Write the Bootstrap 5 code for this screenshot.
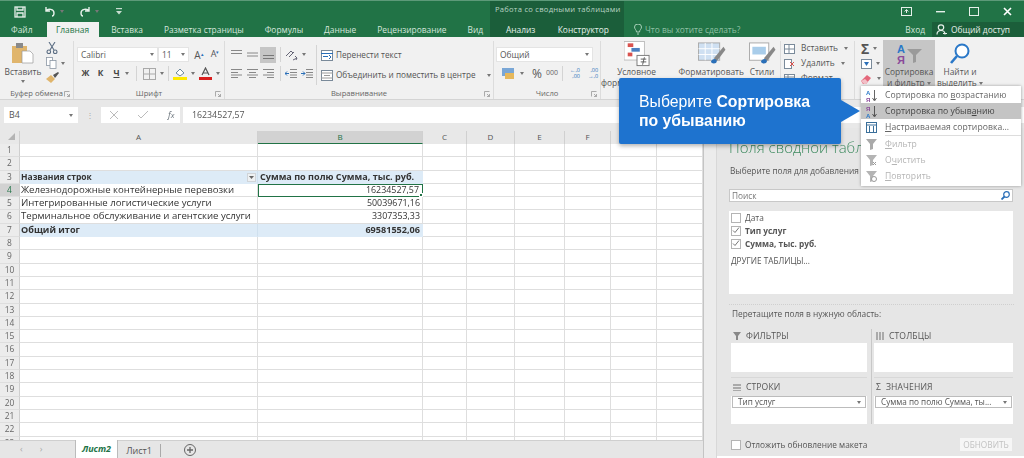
<!DOCTYPE html>
<html lang="ru"><head><meta charset="utf-8"><title>Excel</title>
<link rel="stylesheet" href="https://cdn.jsdelivr.net/npm/bootstrap@5.3.0/dist/css/bootstrap.min.css">
<style>
html,body{margin:0;height:458px;overflow:hidden;background:#fff}
.app{width:1024px;height:458px;position:relative;overflow:hidden;font:8.4px/1.2 "Open Sans",sans-serif;color:#444;filter:blur(.5px)}
svg{display:block;flex:none}
/* title */
.tb{height:37px;background:#217346;color:#d5e6dc;border-top:1px solid #5d9a79}
.tb-l{width:490px}.tb-c{width:134px;background:#1b5e3a}.tb-r{width:400px}
.t1{height:21px}.t2{height:15px}
.q1{margin-left:14px}.q2{margin-left:18px}.q3{margin-left:15px}.q4{margin-left:17px}
.tab{padding:0 10.5px;line-height:15px;white-space:nowrap}
.tab.on{background:#f1f1f1;color:#217346;padding:0 10px 0 9px;margin:0 1.5px 0 4px;height:16px;border-radius:0}
.t2l{padding-left:.5px}
.ctx{font-size:7.6px;letter-spacing:.25px;padding:4px 0 0 5px;color:#b9d4c4}
.ctab{padding-left:16px;width:73px;line-height:15px;color:#e4f0e9}
.ctab+.ctab{padding-left:0}
.win{gap:24px;padding-right:12px;justify-content:flex-end}
.tell{margin-left:10px;color:#8fc0a4;gap:3px;line-height:15px}
.login{margin-left:auto;margin-right:7px;line-height:15px}
.share{width:92px;background:#1b5e3a;height:15px;line-height:15px;padding-left:4px;gap:4px;color:#e6f1ea}
/* ribbon */
.rb{height:63px;background:#f1f1f1;border-bottom:1px solid #d4d4d4;color:#555}
.grp{border-right:1px solid #dcdcdc;margin-top:4px;height:58px;position:relative}
.gb{height:47px}
.gbp{padding-top:4px}
.gl{height:11px;line-height:11px;font-size:7.6px;color:#666;padding:0 3px;position:relative;text-align:center}
.gl svg{position:absolute;right:3px;top:3px}
.g1{width:74px}.g2{width:151px}.g3{width:269px}.g4{width:107px}.g5{width:180px}.g6{width:74px}.g7{width:130px;border:0}
.paste{width:46px;padding-top:2px}
.paste span{margin-top:3px;line-height:9px}
.minis{gap:3px;padding-top:1px}
.ddn{width:0;height:0;border:2.5px solid transparent;border-top:3px solid #777;border-bottom:0;flex:none}
.combo{background:#fff;border:1px solid #e4e4e4;height:15px;line-height:13px;padding:0 3px;color:#555}
.c-font{width:81px;margin-left:3px}.c-size{width:31px}.c-num{width:97px;margin-left:2px}
.fr{height:19px;gap:0}
.bx{width:15px;text-align:center;font-weight:700;color:#444}
.bx2{width:17px}
.A1{font-size:10px;width:16px;text-align:center;color:#555;margin-left:2px}.A2{font-size:9px;width:16px;text-align:center;color:#555}
.A1 sup,.A2 sup{color:#2a6fb8;font-size:5px;top:-.6em}
.vs{width:1px;height:15px;background:#d4d4d4;margin:0 4px;flex:none}
.vs2{margin:0 6px 0 7px}
.algn{width:16px;height:16px;display:flex;align-items:center;justify-content:center;flex:none}
.algn.sel{background:#c6c6c6}
.a-col{padding-left:3px}
.a-rule{height:40px;margin:0 4px 0 3px}
.cmd{gap:3px;white-space:nowrap;color:#555;height:20px;font-size:8.2px}
.pct{font-size:12px;line-height:1;margin-left:8px;color:#555}
.th{font-size:7px;margin-left:4px;color:#666}
.stk{font-size:5.500px;line-height:5.500px;color:#2a6fb8;margin-left:3px;text-align:right}
.bigb{text-align:center;line-height:10.5px;white-space:nowrap}
.bigb svg{margin:0 auto}
.b-cf{margin-left:0;margin-right:auto}
.sortb{width:52px;height:46px;background:#c6c6c6;margin-top:-1px}
.sortb svg{margin-top:3px;margin-bottom:2px}
.findb{width:46px;margin-left:2px;padding-top:2px}
.findb svg{margin-bottom:2px}
.cellr{height:15px;gap:6px;white-space:nowrap;padding-left:3px}
.sumr{height:15px;gap:4px;padding-left:6px;width:28px}
.sig{font-size:14px;line-height:1;font-weight:700}
/* formula */
.fb{height:28px;background:#e8e8e8;padding:7px 0 5px 4px;gap:0}
.fx{background:#fff;height:16px;line-height:16px;color:#555;font-size:8.8px}
.nm{width:74px;padding:0 5px}
.dots{width:23px;text-align:center;color:#aaa;line-height:16px}
.fbtn{width:79px;padding:0 9px;gap:16px}
.ft{margin-left:3px;flex:1;padding-left:9px}
/* sheet */
.main{height:330px}
.sh{width:703px;background:#fff;position:relative}
.ch{height:16px;padding-top:3px;background:#e8e8e8;font-size:8px;color:#555;flex:none}
.ch>div{height:13px;line-height:12px;text-align:center;background:#e8e8e8;border-right:1px solid #d0d0d0;flex:none}
.ch .c0{width:20px;position:relative}
.ch .cA{width:238px}.ch .cB{width:165px;background:#d2d2d2;border-bottom:1px solid #217346;color:#217346}
.cC{width:44px}.cD{width:48px}.cE{width:50px}.cF{width:46px}.cG{width:46px}.cH{width:46px}
.rows{height:296px;overflow:hidden;flex:none}
.r{display:flex;height:13.3px;line-height:12.6px;font-size:9.6px;color:#333}
.r>div{border-bottom:1px solid #dedede;white-space:nowrap;overflow:hidden;flex:none}
.rh{width:20px;background:#ececec;text-align:center;color:#666;font-size:8.4px;border-right:1px solid #cfcfcf}
.rh.on{background:#d2d2d2;color:#217346}
.ra{width:238px;padding-left:1px;border-right:1px solid #dedede}
.rb2{width:165px;padding-right:2px;text-align:right;border-right:1px solid #dedede;font-size:8.9px}
.rx{width:280px;background-image:linear-gradient(#dedede,#dedede),linear-gradient(#dedede,#dedede),linear-gradient(#dedede,#dedede),linear-gradient(#dedede,#dedede),linear-gradient(#dedede,#dedede),linear-gradient(#dedede,#dedede);background-size:1px 100%;background-repeat:no-repeat;background-position:43px 0,91px 0,141px 0,187px 0,233px 0,279px 0}
.r.hd .ra,.r.hd .rb2{background:#ddebf7;font-weight:700;border-bottom-color:#ddebf7;border-right-color:#ddebf7;font-size:9.1px}
.r.hd .ra{display:flex;justify-content:space-between;padding-right:1px;border-right-color:#cfe0ee}
.r.hd .rb2.ttl{text-align:left;padding-left:2px;padding-right:0}
.nmh{font-size:8.500px}
.filt{width:9px;height:9px;margin-top:2px;background:#eef1f3;border:1px solid #d0d4d8;display:flex;align-items:center;justify-content:center;flex:none}
.rb2.cur{outline:1.4px solid #217346;outline-offset:-1.4px;position:relative;overflow:visible;padding-right:3px}
.rb2.cur::after{content:"";position:absolute;right:-1px;bottom:-1px;width:4px;height:4px;background:#217346;border:1px solid #fff}
.stabs{height:18px;background:#e6e6e6;border-top:1px solid #cfcfcf;position:absolute;left:0;right:0;bottom:0;font-size:9px}
.arrs{width:75px;padding-left:20px;gap:17px;color:#aaa}
.st{width:43px;text-align:center;line-height:17px;height:18px}
.st.on{background:#fff;color:#217346;font-weight:700;font-style:italic;margin-top:-1px;border-left:1px solid #bbb;border-right:1px solid #bbb}
.st.off{border-right:1px solid #aaa;height:13px;line-height:13px;color:#555;margin-top:1px}
.plus{margin-left:23px}
.vsc{width:14px;background:#ececec;border-left:1px solid #c4c4c4;border-right:1px solid #d8d8d8}
/* panel */
.pn{width:307px;background:#e6e6e6;padding:1px 0 0 0;height:328px;color:#555;font-size:8.3px}
.ptitle{font-size:15px;font-weight:300;color:#3d8a5f;padding-left:12px;line-height:25px;white-space:nowrap;margin-top:6px}
.psub{padding-left:13px;line-height:12px;margin-top:5px;white-space:nowrap}
.psearch{margin:12px 11px 0 12px;height:13px;background:#fff;border:1px solid #c8c8c8;line-height:11px;padding:0 2px;color:#777}
.flist{margin:9px 11px 0 12px;height:83px;background:#fff;padding:0 2px;color:#555}
.ck{gap:4px;height:13px;line-height:13px}
.cb{width:10px;height:10px;background:#fff;border:1px solid #b4b4b4;flex:none;display:flex;align-items:center;justify-content:center}
.ck.bd{font-weight:700}
.other{margin-top:4px;line-height:13px;font-size:8.2px}
.dots2{margin:10px 10px 0 12px;border-top:1px dotted #cfcfcf}
.drag{padding-left:15px;margin-top:3px;line-height:12px}
.areas{margin:9px 0 0 14px;width:282px;display:grid;grid-template-columns:141px 141px;grid-template-rows:48px 47px}
.ar{padding-right:4px;border-right:1px solid #c8c8c8}
.ar2{padding-left:2px}
.arh{height:14px;gap:5px;padding-left:2px;font-size:8.6px;letter-spacing:.1px}
.arb{background:#fff;height:29px}
.arh.rowhd{border-top:1px solid #d8d8d8;height:19px}
.pick{background:#fff;border:1px solid #bcbcbc;height:12px;line-height:10px;padding:0 4px 0 5px;margin:0 1px;font-size:8.2px;color:#555}
.arb.low{height:28px}
.pfoot{margin:14px 12px 0 14px;height:13px}
.pfoot .btnu{margin-left:auto;width:52px;background:#f6f6f6;color:#c2c2c2;text-align:center;line-height:13px;font-size:8.3px;border:0;padding:0}
/* overlay */
.tip{position:absolute;left:619px;top:78px;width:222px;height:66px;background:#1e73cf;color:#fff;border-radius:2px;box-shadow:0 2px 4px rgba(0,0,0,.3);font:15.8px/18.5px "Liberation Sans",sans-serif;padding:15px 0 0 20px;z-index:5}
.tip::after{content:"";position:absolute;left:222px;top:22px;border-left:19px solid #1e73cf;border-top:11px solid transparent;border-bottom:11px solid transparent}
.menu.dropdown-menu{position:absolute;left:861px;top:86px;width:160px;height:100px;padding:1px 0;margin:0;border:0;border-radius:0;background:#fff;box-shadow:0 0 3px rgba(0,0,0,.35);font-size:8.6px;min-width:0;z-index:4;display:block}
.menu .dropdown-item{height:16px;line-height:16px;padding:0 0 0 5px;display:flex;gap:8px;align-items:center;color:#666;font-size:8.6px;letter-spacing:.05px}
.menu .dropdown-item.act{background:#c4c4c4;color:#444}
.menu .dropdown-item.dis{color:#b5b5b5}
.menu .dropdown-divider{margin:0 0 0 24px;border-color:#ddd}
.lt{font:700 6px "Liberation Sans",sans-serif}
u{text-underline-offset:1px}
</style></head><body>
<div class="app">

<div class="tb d-flex">
 <div class="tb-l">
  <div class="t1 d-flex align-items-center">
   <svg class="q1" width="12" height="12" viewBox="0 0 12 12" fill="none" stroke="#e6f0ea" stroke-width="1.3"><rect x="1" y="1" width="10" height="10"/><path d="M3 1v3h6V1M3 11V7h6v4"/></svg>
   <svg class="q2" width="12" height="11" viewBox="0 0 12 11" fill="none" stroke="#e6f0ea" stroke-width="1.4"><path d="M2 1v4h4M2 5c2-3 8-2 8 2 0 2-1 3-2 3"/></svg>
   <span class="ddn ms-1"></span>
   <svg class="q3" width="12" height="11" viewBox="0 0 12 11" fill="none" stroke="#e6f0ea" stroke-width="1.4"><path d="M10 1v4H6M10 5C8 2 2 3 2 7c0 2 1 3 2 3"/></svg>
   <span class="ddn ms-1"></span>
   <svg class="q4" width="6" height="7" viewBox="0 0 6 7" fill="#c9ddd1"><rect y="0" width="6" height="1.2"/><path d="M0 3h6L3 6.5z"/></svg>
  </div>
  <div class="t2 d-flex t2l">
   <div class="tab">Файл</div><div class="tab on">Главная</div><div class="tab">Вставка</div><div class="tab">Разметка страницы</div><div class="tab">Формулы</div><div class="tab">Данные</div><div class="tab">Рецензирование</div><div class="tab">Вид</div>
  </div>
 </div>
 <div class="tb-c">
  <div class="t1 ctx text-nowrap">Работа со сводными таблицами</div>
  <div class="t2 d-flex"><div class="ctab">Анализ</div><div class="ctab">Конструктор</div></div>
 </div>
 <div class="tb-r">
  <div class="t1 d-flex align-items-center win">
   <svg width="11" height="9" viewBox="0 0 11 9" fill="none" stroke="#e6f0ea"><rect x=".5" y=".5" width="10" height="8"/><path d="M5.5 6V3M3.7 4.5l1.8-2 1.8 2" /></svg>
   <svg width="9" height="2" viewBox="0 0 9 2"><rect width="9" height="1.4" fill="#e6f0ea"/></svg>
   <svg width="10" height="9" viewBox="0 0 10 9" fill="none" stroke="#e6f0ea"><rect x=".5" y=".5" width="9" height="8"/></svg>
   <svg width="9" height="9" viewBox="0 0 9 9" stroke="#fff" stroke-width="1.6"><path d="M1 1l7 7M8 1L1 8"/></svg>
  </div>
  <div class="t2 d-flex">
   <div class="tell d-flex align-items-center"><svg width="8" height="11" viewBox="0 0 8 11" fill="none" stroke="#a8d0b8"><path d="M2.5 8c0-2-2-3-2-5a3.5 3 0 0 1 7 0c0 2-2 3-2 5zM3 10h2"/></svg><span>Что вы хотите сделать?</span></div>
   <div class="login">Вход</div>
   <div class="share d-flex align-items-center"><svg width="11" height="11" viewBox="0 0 11 11" fill="none" stroke="#e6f0ea" stroke-width="1.2"><circle cx="5" cy="3.5" r="2.7"/><path d="M1 10.5c0-3 2-4 4-4s4 1 4 4M7 9.500h4"/></svg><span>Общий доступ</span></div>
  </div>
 </div>
</div>

<div class="rb d-flex">
 <div class="grp g1">
  <div class="gb d-flex">
   <div class="paste d-flex flex-column align-items-center">
    <svg width="22" height="21" viewBox="0 0 22 21"><rect x="0" y="3" width="15" height="17" fill="#e0b56c"/><rect x="4" y="0" width="7" height="5" fill="#8a8a8a"/><path d="M10 8h8l3 3v9H10z" fill="#fff" stroke="#999" stroke-width=".7"/></svg>
    <span>Вставить</span><span class="ddn mt-1"></span>
   </div>
   <div class="minis d-flex flex-column">
    <svg width="12" height="12" viewBox="0 0 12 12" fill="none" stroke="#5b6d83" stroke-width="1.1"><path d="M3 0l5 8M9 0L4 8"/><circle cx="2.800" cy="9.800" r="1.800"/><circle cx="9.200" cy="9.800" r="1.800"/></svg>
    <div class="d-flex align-items-center gap-1"><svg width="11" height="12" viewBox="0 0 11 12" fill="#fff" stroke="#8a96a3" stroke-width=".8"><rect x=".5" y=".5" width="6" height="8"/><rect x="4" y="3.500" width="6" height="8"/></svg><span class="ddn"></span></div>
    <svg width="13" height="11" viewBox="0 0 13 11"><path d="M0 7l5-4 4 4-4 4z" fill="#e0b56c"/><path d="M7 3l5-3 1 1-4 5z" fill="#555"/></svg>
   </div>
  </div>
  <div class="gl">Буфер обмена<svg width="6" height="6" viewBox="0 0 6 6" fill="none" stroke="#999" stroke-width=".8"><path d="M.5 5.500V.5h5M3 3l2.500 2.500M5.500 3v2.500H3"/></svg></div>
 </div>

 <div class="grp g2">
  <div class="gb gbp">
   <div class="fr d-flex align-items-center">
    <div class="combo c-font d-flex justify-content-between align-items-center"><span>Calibri</span><span class="ddn"></span></div>
    <div class="combo c-size d-flex justify-content-between align-items-center"><span>11</span><span class="ddn"></span></div>
    <span class="A1">A<sup>▴</sup></span><span class="A2">A<sup>▾</sup></span>
   </div>
   <div class="fr d-flex align-items-center">
    <span class="bx ms-1">Ж</span><span class="bx">К</span><span class="bx bx2"><u>Ч</u></span><span class="ddn"></span>
    <span class="vs vs2"></span>
    <svg width="13" height="12" viewBox="0 0 13 12" fill="none" stroke="#a9a9a9"><rect x=".5" y=".5" width="12" height="11"/><path d="M6.500 0v12M0 6h13"/></svg>
    <span class="ddn ms-1"></span><span class="vs"></span>
    <svg width="14" height="13" viewBox="0 0 14 13"><path d="M3 6l4-4 4 4-4 3z" fill="#fff" stroke="#6d8a9e"/><rect y="10" width="14" height="3" fill="#ffea00"/></svg>
    <span class="ddn ms-1"></span>
    <svg class="ms-1" width="13" height="13" viewBox="0 0 13 13"><path d="M3 8l3.500-7L10 8M4.500 6h4" fill="none" stroke="#555" stroke-width="1.2"/><rect y="10" width="13" height="3" fill="#d81e1e"/></svg>
    <span class="ddn ms-1"></span>
   </div>
  </div>
  <div class="gl">Шрифт<svg width="6" height="6" viewBox="0 0 6 6" fill="none" stroke="#999" stroke-width=".8"><path d="M.5 5.500V.5h5M3 3l2.500 2.500M5.500 3v2.500H3"/></svg></div>
 </div>

 <div class="grp g3">
  <div class="gb gbp d-flex">
   <div class="a-col">
    <div class="fr d-flex align-items-center">
     <div class="algn"><svg width="11" height="9" viewBox="0 0 11 9" stroke="#888"><path d="M0 .5h11M0 3.500h11"/></svg></div>
     <div class="algn"><svg width="11" height="9" viewBox="0 0 11 9" stroke="#888"><path d="M0 3h11M0 6h11"/></svg></div>
     <div class="algn sel"><svg width="11" height="9" viewBox="0 0 11 9" stroke="#777"><path d="M0 5.500h11M0 8.500h11"/></svg></div>
     <span class="vs"></span>
     <svg width="13" height="12" viewBox="0 0 13 12" fill="none" stroke="#667"><path d="M1 7l5-5 2 2M4 8l5-5M8 11l4-2M10 7l2 2-1 2"/></svg>
     <span class="ddn ms-1"></span>
    </div>
    <div class="fr d-flex align-items-center">
     <div class="algn"><svg width="11" height="9" viewBox="0 0 11 9" stroke="#888"><path d="M0 .5h11M0 3.500h7M0 6h11M0 8.500h7"/></svg></div>
     <div class="algn"><svg width="11" height="9" viewBox="0 0 11 9" stroke="#888"><path d="M0 .5h11M2 3.500h7M0 6h11M2 8.500h7"/></svg></div>
     <div class="algn"><svg width="11" height="9" viewBox="0 0 11 9" stroke="#888"><path d="M0 .5h11M4 3.500h7M0 6h11M4 8.500h7"/></svg></div>
     <span class="vs"></span>
     <svg width="12" height="9" viewBox="0 0 12 9" stroke="#888" fill="none"><path d="M5 .5h7M5 3.500h7M5 6h7M5 8.500h7"/><path d="M4 4.500H0M2 2.500l-2 2 2 2" stroke="#2a6fb8"/></svg>
     <svg class="ms-1" width="12" height="9" viewBox="0 0 12 9" stroke="#888" fill="none"><path d="M5 .5h7M5 3.500h7M5 6h7M5 8.500h7"/><path d="M0 4.500h4M2 2.500l2 2-2 2" stroke="#2a6fb8"/></svg>
    </div>
   </div>
   <span class="vs a-rule"></span>
   <div>
    <div class="cmd d-flex align-items-center"><svg width="12" height="11" viewBox="0 0 12 11" fill="none" stroke="#7a8a9a"><rect x=".5" y=".5" width="11" height="10" fill="#fff"/><path d="M0 3.500h12M2 6.500h5M8 5l2 2-2 2" stroke="#2a6fb8"/></svg><span>Перенести текст</span></div>
    <div class="cmd d-flex align-items-center"><svg width="12" height="11" viewBox="0 0 12 11" fill="none" stroke="#7a8a9a"><rect x=".5" y=".5" width="11" height="10" fill="#fff"/><path d="M0 3h12M0 8h12M3 5.500h6" stroke="#9a9a9a"/></svg><span>Объединить и поместить в центре</span><span class="ddn ms-2"></span></div>
   </div>
  </div>
  <div class="gl">Выравнивание<svg width="6" height="6" viewBox="0 0 6 6" fill="none" stroke="#999" stroke-width=".8"><path d="M.5 5.500V.5h5M3 3l2.500 2.500M5.500 3v2.500H3"/></svg></div>
 </div>

 <div class="grp g4">
  <div class="gb gbp">
   <div class="fr d-flex align-items-center"><div class="combo c-num d-flex justify-content-between align-items-center"><span>Общий</span><span class="ddn"></span></div></div>
   <div class="fr d-flex align-items-center ps-1">
    <svg class="ms-1" width="14" height="12" viewBox="0 0 14 12"><rect width="12" height="8" fill="#7aa7d6"/><rect x="3" y="5" width="9" height="6" fill="#e6b85c"/></svg>
    <span class="ddn ms-1"></span>
    <span class="pct">%</span>
    <span class="th">000</span>
    <span class="vs"></span>
    <span class="stk">←,0<br>,00</span>
    <span class="stk ms-2">,00<br>→,0</span>
   </div>
  </div>
  <div class="gl">Число<svg width="6" height="6" viewBox="0 0 6 6" fill="none" stroke="#999" stroke-width=".8"><path d="M.5 5.500V.5h5M3 3l2.500 2.500M5.500 3v2.500H3"/></svg></div>
 </div>

 <div class="grp g5 d-flex">
  <div class="bigb b-cf">
   <svg width="26" height="26" viewBox="0 0 28 27"><rect width="22" height="20" fill="#fff" stroke="#bbb"/><rect x="4" y="2" width="6" height="4" fill="#d9534f"/><rect x="8" y="7" width="9" height="4" fill="#4a7fc0"/><rect x="4" y="12" width="5" height="4" fill="#d9534f"/><rect x="14" y="15" width="13" height="11" fill="#fff" stroke="#777"/><path d="M18 19h6M18 22h6M22 17l-2 8" stroke="#555"/></svg>
   <div>Условное</div><div>форматирование</div>
  </div>
  <div class="bigb me-1">
   <svg width="30" height="26" viewBox="0 0 30 27"><rect x="2" y="2" width="22" height="18" fill="#cfe0f2" stroke="#aaa"/><path d="M2 8h22M2 14h22M9 2v18M16 2v18" stroke="#fff"/><path d="M28 6L18 18l3 3L30 9z" fill="#888"/><path d="M15 21c2-3 6-3 6 0 0 3-6 3-6 0z" fill="#2a6fb8"/></svg>
   <div>Форматировать</div><div>как таблицу</div>
  </div>
  <div class="bigb pe-1">
   <svg width="28" height="26" viewBox="0 0 28 27"><rect x="1" y="2" width="20" height="18" fill="#fff" stroke="#aaa"/><rect x="4" y="6" width="14" height="8" fill="#a9cdea"/><path d="M26 6L16 18l3 3L28 9z" fill="#888"/><path d="M13 21c2-3 6-3 6 0 0 3-6 3-6 0z" fill="#2a6fb8"/></svg>
   <div>Стили</div><div>ячеек</div>
  </div>
 </div>

 <div class="grp g6">
  <div class="cellr d-flex align-items-center"><svg width="11" height="10" viewBox="0 0 11 10" fill="#fff" stroke="#7a8a9a"><rect x=".5" y=".5" width="10" height="9"/><path d="M0 5h11M5 0v10"/></svg><span>Вставить</span><span class="ddn"></span></div>
  <div class="cellr d-flex align-items-center"><svg width="11" height="10" viewBox="0 0 11 10" fill="#fff" stroke="#7a8a9a"><rect x=".5" y=".5" width="7" height="9"/><path d="M6 3l4 4M10 3L6 7" stroke="#d9534f"/></svg><span>Удалить</span><span class="ddn"></span></div>
  <div class="cellr d-flex align-items-center"><svg width="11" height="10" viewBox="0 0 11 10" fill="#fff" stroke="#7a8a9a"><rect x=".5" y=".5" width="10" height="9"/><path d="M0 3h11M0 6h11M4 0v10"/></svg><span>Формат</span></div>
 </div>

 <div class="grp g7 d-flex">
  <div>
   <div class="sumr d-flex align-items-center"><span class="sig">Σ</span><span class="ddn"></span></div>
   <div class="sumr d-flex align-items-center"><svg width="11" height="10" viewBox="0 0 11 10"><rect x=".5" y=".5" width="10" height="9" fill="#fff" stroke="#7a8a9a"/><path d="M3 3h5L5.500 7z" fill="#2a6fb8"/></svg><span class="ddn"></span></div>
   <div class="sumr d-flex align-items-center"><svg width="12" height="10" viewBox="0 0 12 10"><path d="M0 7l6-6 4 3-5 6H2z" fill="#e4677a"/><path d="M0 7l3 3h2l2-2-3-3z" fill="#f3c0c8"/></svg><span class="ddn"></span></div>
  </div>
  <div class="sortb bigb">
   <svg width="28" height="22" viewBox="0 0 28 22"><text x="2" y="10" font-size="11" font-weight="700" fill="#2a78c8" font-family="Liberation Sans">А</text><text x="2" y="21" font-size="11" font-weight="700" fill="#8a4a9a" font-family="Liberation Sans">Я</text><path d="M12 6h15l-6 6v7l-3 1v-8z" fill="#9a9a9a"/></svg>
   <div>Сортировка</div><div>и фильтр <span class="ddn d-inline-block align-middle"></span></div>
  </div>
  <div class="findb bigb">
   <svg width="22" height="22" viewBox="0 0 22 22" fill="none" stroke="#2a78c8" stroke-width="2"><circle cx="13" cy="8" r="6.500" fill="#fff"/><path d="M8 13L2 20" stroke-width="2.600"/></svg>
   <div>Найти и</div><div>выделить <span class="ddn d-inline-block align-middle"></span></div>
  </div>
 </div>
</div>

<div class="fb d-flex">
 <div class="fx nm d-flex justify-content-between align-items-center"><span>B4</span><span class="ddn"></span></div>
 <div class="dots">⋮</div>
 <div class="fx fbtn d-flex align-items-center">
  <svg width="8" height="8" viewBox="0 0 8 8" stroke="#bbb"><path d="M0 0l8 8M8 0L0 8"/></svg>
  <svg class="ms-1" width="10" height="8" viewBox="0 0 10 8" stroke="#bbb" fill="none"><path d="M0 4l3 3 7-7"/></svg>
  <i class="ms-1 text-secondary">f<small>x</small></i>
 </div>
 <div class="fx ft">16234527,57</div>
</div>

<div class="main d-flex">
 <div class="sh">
  <div class="ch d-flex">
   <div class="c0"><svg class="position-absolute end-0 bottom-0 me-1 mb-1" width="7" height="7" viewBox="0 0 7 7"><path d="M7 0v7H0z" fill="#b4b4b4"/></svg></div>
   <div class="cA">A</div><div class="cB">B</div><div class="cC">C</div><div class="cD">D</div><div class="cE">E</div><div class="cF">F</div><div class="cG">G</div><div class="cH">H</div>
  </div>
  <div class="rows">
   <div class="r"><div class="rh">1</div><div class="ra"></div><div class="rb2"></div><div class="rx"></div></div>
   <div class="r"><div class="rh">2</div><div class="ra"></div><div class="rb2"></div><div class="rx"></div></div>
   <div class="r hd"><div class="rh">3</div><div class="ra"><span class="nmh">Названия строк</span><span class="filt"><svg width="5" height="3" viewBox="0 0 5 3"><path d="M0 0h5L2.500 3z" fill="#666"/></svg></span></div><div class="rb2 ttl">Сумма по полю Сумма, тыс. руб.</div><div class="rx"></div></div>
   <div class="r"><div class="rh on">4</div><div class="ra">Железнодорожные контейнерные перевозки</div><div class="rb2 cur">16234527,57</div><div class="rx"></div></div>
   <div class="r"><div class="rh">5</div><div class="ra">Интегрированные логистические услуги</div><div class="rb2">50039671,16</div><div class="rx"></div></div>
   <div class="r"><div class="rh">6</div><div class="ra">Терминальное обслуживание и агентские услуги</div><div class="rb2">3307353,33</div><div class="rx"></div></div>
   <div class="r hd"><div class="rh">7</div><div class="ra"><span>Общий итог</span></div><div class="rb2">69581552,06</div><div class="rx"></div></div>
   <div class="r"><div class="rh">8</div><div class="ra"></div><div class="rb2"></div><div class="rx"></div></div>
   <div class="r"><div class="rh">9</div><div class="ra"></div><div class="rb2"></div><div class="rx"></div></div>
   <div class="r"><div class="rh">10</div><div class="ra"></div><div class="rb2"></div><div class="rx"></div></div>
   <div class="r"><div class="rh">11</div><div class="ra"></div><div class="rb2"></div><div class="rx"></div></div>
   <div class="r"><div class="rh">12</div><div class="ra"></div><div class="rb2"></div><div class="rx"></div></div>
   <div class="r"><div class="rh">13</div><div class="ra"></div><div class="rb2"></div><div class="rx"></div></div>
   <div class="r"><div class="rh">14</div><div class="ra"></div><div class="rb2"></div><div class="rx"></div></div>
   <div class="r"><div class="rh">15</div><div class="ra"></div><div class="rb2"></div><div class="rx"></div></div>
   <div class="r"><div class="rh">16</div><div class="ra"></div><div class="rb2"></div><div class="rx"></div></div>
   <div class="r"><div class="rh">17</div><div class="ra"></div><div class="rb2"></div><div class="rx"></div></div>
   <div class="r"><div class="rh">18</div><div class="ra"></div><div class="rb2"></div><div class="rx"></div></div>
   <div class="r"><div class="rh">19</div><div class="ra"></div><div class="rb2"></div><div class="rx"></div></div>
   <div class="r"><div class="rh">20</div><div class="ra"></div><div class="rb2"></div><div class="rx"></div></div>
   <div class="r"><div class="rh">21</div><div class="ra"></div><div class="rb2"></div><div class="rx"></div></div>
   <div class="r"><div class="rh">22</div><div class="ra"></div><div class="rb2"></div><div class="rx"></div></div>
   <div class="r"><div class="rh">23</div><div class="ra"></div><div class="rb2"></div><div class="rx"></div></div>
  </div>
  <div class="stabs d-flex align-items-center">
   <div class="arrs d-flex"><span>‹</span><span>›</span></div>
   <div class="st on">Лист2</div><div class="st off">Лист1</div>
   <svg class="plus" width="12" height="12" viewBox="0 0 12 12" fill="none" stroke="#666"><circle cx="6" cy="6" r="5.500"/><path d="M3 6h6M6 3v6" stroke-width="1.300"/></svg>
  </div>
 </div>
 <div class="vsc"></div>
 <div class="pn">
  <div class="ptitle">Поля сводной таблицы</div>
  <div class="psub">Выберите поля для добавления в отчет:</div>
  <div class="psearch d-flex justify-content-between align-items-center"><span>Поиск</span><svg width="9" height="9" viewBox="0 0 9 9" fill="none" stroke="#2a6fb8" stroke-width="1.200"><circle cx="5.500" cy="3.500" r="2.800"/><path d="M3.500 5.500L.5 8.500" stroke-width="1.800"/></svg></div>
  <div class="flist">
   <div class="ck d-flex align-items-center"><span class="cb"></span><span>Дата</span></div>
   <div class="ck bd d-flex align-items-center"><span class="cb"><svg width="8" height="7" viewBox="0 0 8 7" fill="none" stroke="#777"><path d="M1 3.500l2 2 4-5"/></svg></span><span>Тип услуг</span></div>
   <div class="ck bd d-flex align-items-center"><span class="cb"><svg width="8" height="7" viewBox="0 0 8 7" fill="none" stroke="#777"><path d="M1 3.500l2 2 4-5"/></svg></span><span>Сумма, тыс. руб.</span></div>
   <div class="other">ДРУГИЕ ТАБЛИЦЫ...</div>
  </div>
  <div class="dots2"></div>
  <div class="drag">Перетащите поля в нужную область:</div>
  <div class="areas">
   <div class="ar">
    <div class="arh d-flex align-items-center"><svg width="8" height="8" viewBox="0 0 8 8"><path d="M0 0h8L5 4v4H3V4z" fill="#888"/></svg>ФИЛЬТРЫ</div>
    <div class="arb"></div>
   </div>
   <div class="ar2">
    <div class="arh d-flex align-items-center"><svg width="8" height="8" viewBox="0 0 8 8" fill="#aaa"><path d="M0 0h2v8H0zM3 0h2v8H3zM6 0h2v8H6z"/></svg>СТОЛБЦЫ</div>
    <div class="arb"></div>
   </div>
   <div class="ar">
    <div class="rowhd arh d-flex align-items-center"><svg width="8" height="7" viewBox="0 0 8 7" fill="#aaa"><path d="M0 0h8v2H0zM0 3h8v2H0zM0 6h8v1H0z"/></svg>СТРОКИ</div>
    <div class="arb low"><div class="pick d-flex justify-content-between align-items-center"><span>Тип услуг</span><span class="ddn"></span></div></div>
   </div>
   <div class="ar2">
    <div class="rowhd arh d-flex align-items-center"><span>Σ</span>ЗНАЧЕНИЯ</div>
    <div class="arb low"><div class="pick d-flex justify-content-between align-items-center"><span>Сумма по полю Сумма, ты...</span><span class="ddn"></span></div></div>
   </div>
  </div>
  <div class="pfoot d-flex align-items-center gap-1"><span class="cb"></span><span>Отложить обновление макета</span><button class="btnu" type="button">ОБНОВИТЬ</button></div>
 </div>
</div>

<div class="tip">Выберите <b>Сортировка</b><br><b>по убыванию</b></div>

<div class="dropdown-menu menu show">
 <a class="dropdown-item" href="#"><svg width="11" height="13" viewBox="0 0 11 13"><text class="lt" x="0" y="6" fill="#2a78c8">А</text><text class="lt" x="0" y="12.500" fill="#8a4a9a">Я</text><path d="M8.500 1v10M6.500 9l2 3 2-3" fill="none" stroke="#666"/></svg><span>Сортировка по <u>в</u>озрастанию</span></a>
 <a class="dropdown-item act" href="#"><svg width="11" height="13" viewBox="0 0 11 13"><text class="lt" x="0" y="6" fill="#8a4a9a">Я</text><text class="lt" x="0" y="12.500" fill="#2a78c8">А</text><path d="M8.500 1v10M6.500 9l2 3 2-3" fill="none" stroke="#555"/></svg><span>Сортировка по убыв<u>а</u>нию</span></a>
 <a class="dropdown-item" href="#"><svg width="11" height="11" viewBox="0 0 11 11" fill="none" stroke="#3a6f9a"><rect x=".5" y=".5" width="10" height="10"/><path d="M0 3h11M3.500 4v6M7.500 4v6"/></svg><span><u>Н</u>астраиваемая сортировка...</span></a>
 <div class="dropdown-divider"></div>
 <a class="dropdown-item dis" href="#"><svg width="11" height="11" viewBox="0 0 11 11"><path d="M0 0h11L7 5v5l-3 1V5z" fill="#aaa"/></svg><span><u>Ф</u>ильтр</span></a>
 <a class="dropdown-item dis" href="#"><svg width="11" height="11" viewBox="0 0 11 11"><path d="M0 0h11L7 5v5l-3 1V5z" fill="#b4b4b4"/><path d="M7 7l3 3M10 7l-3 3" stroke="#999"/></svg><span>О<u>ч</u>истить</span></a>
 <a class="dropdown-item dis" href="#"><svg width="11" height="11" viewBox="0 0 11 11"><path d="M0 0h11L7 5v5l-3 1V5z" fill="#b4b4b4"/><circle cx="8" cy="8" r="2.500" fill="#fff" stroke="#999"/></svg><span><u>П</u>овторить</span></a>
</div>

</div>
<script src="https://cdn.jsdelivr.net/npm/bootstrap@5.3.0/dist/js/bootstrap.bundle.min.js"></script>
</body></html>
